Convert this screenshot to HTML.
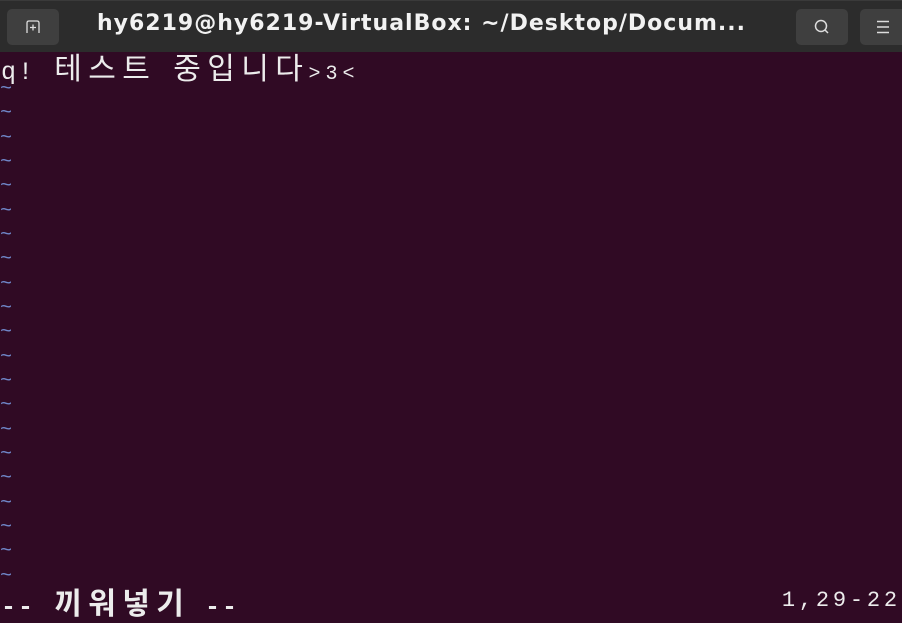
<!DOCTYPE html>
<html><head><meta charset="utf-8"><style>
body{margin:0;width:902px;height:623px;overflow:hidden;background:#300a24;font-family:"Liberation Mono","Noto Sans CJK KR",monospace;}
.bar{position:absolute;left:0;top:0;width:902px;height:52px;background:#2c2c2c;border-top:1px solid #3a3a3a;box-sizing:border-box}
.btn{position:absolute;top:8px;height:36px;width:52px;background:#3f3f3f;border-radius:5px}
.title{position:absolute;left:97px;top:10px;font:bold 22px "DejaVu Sans","Liberation Sans",sans-serif;color:#f2f2f2;letter-spacing:1px;white-space:nowrap}
.row{position:absolute;left:0;height:24px;line-height:24px;font-size:25px;color:#ececec;white-space:nowrap}
.c{display:inline-block;width:17px;text-align:center}
.k{display:inline-block;width:34px;text-align:center;font-family:"Noto Sans CJK KR",sans-serif;font-size:30px}
.t{color:#6f86c8;font-size:20px}
</style></head><body>
<div class="bar">
 <div class="btn" style="left:7px"><svg width="52" height="36"><path d="M20 24 V14 Q20 12 22 12 H30 Q32 12 32 14 V24" fill="none" stroke="#ddd" stroke-width="1.3"/><path d="M23 18.5 H29 M26 15.5 V21.5" stroke="#ddd" stroke-width="1.3"/></svg></div>
 <div class="title">hy6219@hy6219-VirtualBox: ~/Desktop/Docum...</div>
 <div class="btn" style="left:796px"><svg width="52" height="36"><circle cx="25" cy="17" r="5.5" fill="none" stroke="#ddd" stroke-width="1.5"/><path d="M29 21 L32 24" stroke="#ddd" stroke-width="1.5"/></svg></div>
 <div class="btn" style="left:860px;width:60px"><svg width="52" height="36"><path d="M17 12.5 H29 M17 18 H29 M17 23.5 H29" stroke="#ddd" stroke-width="1.5"/></svg></div>
</div>
<div class="row" style="top:54px"><span class="c">q</span><span class="c">!</span><span class="c"> </span><span class="k">테</span><span class="k">스</span><span class="k">트</span><span class="c"> </span><span class="k">중</span><span class="k">입</span><span class="k">니</span><span class="k">다</span><span class="c" style="font-size:20px">&gt;</span><span class="c" style="font-size:20px">3</span><span class="c" style="font-size:20px">&lt;</span></div>
<div class="row t" style="top:78px">~</div>
<div class="row t" style="top:102px">~</div>
<div class="row t" style="top:127px">~</div>
<div class="row t" style="top:151px">~</div>
<div class="row t" style="top:175px">~</div>
<div class="row t" style="top:200px">~</div>
<div class="row t" style="top:224px">~</div>
<div class="row t" style="top:248px">~</div>
<div class="row t" style="top:273px">~</div>
<div class="row t" style="top:297px">~</div>
<div class="row t" style="top:321px">~</div>
<div class="row t" style="top:346px">~</div>
<div class="row t" style="top:370px">~</div>
<div class="row t" style="top:394px">~</div>
<div class="row t" style="top:419px">~</div>
<div class="row t" style="top:443px">~</div>
<div class="row t" style="top:467px">~</div>
<div class="row t" style="top:492px">~</div>
<div class="row t" style="top:516px">~</div>
<div class="row t" style="top:540px">~</div>
<div class="row t" style="top:565px">~</div>
<div class="row" style="top:589px;font-weight:bold"><span class="c">-</span><span class="c">-</span><span class="c"> </span><span class="k" style="font-weight:bold">끼</span><span class="k" style="font-weight:bold">워</span><span class="k" style="font-weight:bold">넣</span><span class="k" style="font-weight:bold">기</span><span class="c"> </span><span class="c">-</span><span class="c">-</span></div>
<div class="row" style="top:589px;left:780px;font-size:22px"><span class="c">1</span><span class="c">,</span><span class="c">2</span><span class="c">9</span><span class="c">-</span><span class="c">2</span><span class="c">2</span></div>
</body></html>
